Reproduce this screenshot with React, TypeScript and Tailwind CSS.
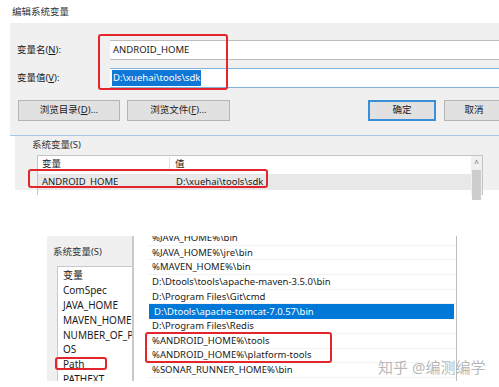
const FONT = "font-['Noto_Sans','Noto_Sans_CJK_SC',sans-serif]";

const pathRows = [
  '%JAVA_HOME%\\bin',
  '%JAVA_HOME%\\jre\\bin',
  '%MAVEN_HOME%\\bin',
  'D:\\Dtools\\tools\\apache-maven-3.5.0\\bin',
  'D:\\Program Files\\Git\\cmd',
  'D:\\Dtools\\apache-tomcat-7.0.57\\bin',
  'D:\\Program Files\\Redis',
  '%ANDROID_HOME%\\tools',
  '%ANDROID_HOME%\\platform-tools',
  '%SONAR_RUNNER_HOME%\\bin',
];

const varRows = ['变量', 'ComSpec', 'JAVA_HOME', 'MAVEN_HOME', 'NUMBER_OF_PROCESSORS', 'OS', 'Path', 'PATHEXT'];

function WinButton({ label, width, primary }: { label: React.ReactNode; width: string; primary?: boolean }) {
  return (
    <div
      className={`flex h-[21px] items-center justify-center bg-[#e1e1e1] text-[9.5px] text-[#222] ${width} ${
        primary ? 'border-2 border-[#3a8fd6]' : 'border border-[#b5b5b5]'
      }`}
    >
      {label}
    </div>
  );
}

export default function App() {
  return (
    <div className={`relative h-[387px] w-[499px] overflow-hidden bg-white text-[#1a1a1a] ${FONT}`}>
      {/* top dialog */}
      <div className="h-[23px] pl-[12px] pt-[5px] text-[9.5px] leading-[14px] text-[#333]">编辑系统变量</div>
      <div className="ml-[10px] h-[112px] bg-[#f0f0f0] pt-[17px]">
        <div className="flex h-[20px] items-center">
          <div className="w-[100px] pl-[7px] text-[9.5px]">
            变量名(<span className="underline">N</span>):
          </div>
          <div className="flex h-[20px] flex-1 items-center border-y border-[#bdbdbd] bg-white pl-[3px] text-[9.5px]">
            ANDROID_HOME
          </div>
        </div>
        <div className="mt-[8px] flex h-[20px] items-center">
          <div className="w-[100px] pl-[7px] text-[9.5px]">
            变量值(<span className="underline">V</span>):
          </div>
          <div className="flex h-[20px] flex-1 items-center border-y border-[#7fb2dd] bg-white pl-[2px] text-[9.5px]">
            <span className="bg-[#0f78d7] px-[1px] leading-[16px] text-white">D:\xuehai\tools\sdk</span>
          </div>
        </div>
        <div className="mt-[12px] flex">
          <div className="ml-[8px]">
            <WinButton width="w-[102px]" label={<>浏览目录(<span className="underline">D</span>)...</>} />
          </div>
          <div className="ml-[7px]">
            <WinButton width="w-[103px]" label={<>浏览文件(<span className="underline">F</span>)...</>} />
          </div>
          <div className="ml-[138px]">
            <WinButton width="w-[68px]" primary label="确定" />
          </div>
          <div className="ml-[8px]">
            <WinButton width="w-[60px]" label="取消" />
          </div>
        </div>
      </div>
      <div className="ml-[10px] h-[1px] bg-[#a8c8e6]" />
      <div className="flex h-[54px]">
        <div className="w-[15px] bg-white" />
        <div className="flex-1 bg-[#f0f0f0] pl-[17px] pt-[1px]">
          <div className="text-[9.5px] leading-[16px] text-[#333]">系统变量(S)</div>
          <div className="ml-[5px] mt-[2px] flex h-[40px] w-[446px] border border-b-0 border-[#c4c4c4] bg-white">
            <div className="flex-1">
              <div className="flex h-[15px] items-center text-[9.5px] leading-[14px]">
                <div className="w-[132px] border-r border-[#e5e5e5] pl-[4px]">变量</div>
                <div className="pl-[5px]">值</div>
              </div>
              <div className="mt-[3px] flex h-[16px] items-center bg-[#e8e8e8] text-[9.5px] leading-[14px]">
                <div className="w-[133px] pl-[4px]">ANDROID_HOME</div>
                <div className="pl-[5px]">D:\xuehai\tools\sdk</div>
              </div>
            </div>
            <div className="w-[11px] bg-[#f0f0f0]">
              <div className="flex h-[14px] items-center justify-center text-[8px] text-[#666]">^</div>
              <div className="mx-auto h-[30px] w-[9px] bg-[#cdcdcd]" />
            </div>
          </div>
        </div>
      </div>

      {/* bottom dialog */}
      <div className="mt-[46px] flex h-[145px]">
        <div className="ml-[47px] w-[85px] overflow-hidden bg-[#f0f0f0] pl-[6px] pt-[8px]">
          <div className="text-[9.5px] leading-[16px] text-[#333]">系统变量(S)</div>
          <div className="ml-[4px] mt-[6px] h-[120px] overflow-hidden border-l border-t border-[#c8c8c8] bg-white pl-[5px] pt-[1px]">
            {varRows.map((v) => (
              <div key={v} className="flex h-[14.8px] items-center whitespace-nowrap text-[10px] leading-[14px]">
                {v}
              </div>
            ))}
          </div>
        </div>
        <div className="w-[2px] bg-[#c9c9c9]" />
        <div className="ml-[13px] w-[310px] overflow-hidden border-r border-[#bdbdbd] bg-white">
          <div className="-mt-[5px]">
            {pathRows.map((p, i) => (
              <div
                key={p}
                className={`flex h-[14.7px] items-center whitespace-nowrap pl-[5px] text-[9.5px] leading-[14px] ${
                  i === 5 ? 'mx-[2px] bg-[#0078d7] pl-[3px] text-white' : 'border-b border-[#f3f3f3]'
                }`}
              >
                {p}
              </div>
            ))}
          </div>
        </div>
      </div>

      {/* watermark */}
      <div className="absolute left-[378px] top-[357px] text-[15px] leading-[20px] text-[#a5a5a5]/80">知乎 @编测编学</div>

      {/* red highlight boxes */}
      <div className="absolute left-[98px] top-[34px] h-[56px] w-[130px] rounded-[3px] border-2 border-[#e3262b]" />
      <div className="absolute left-[28px] top-[169px] h-[19px] w-[240px] rounded-[3px] border-2 border-[#e3262b]" />
      <div className="absolute left-[145px] top-[332px] h-[31px] w-[187px] rounded-[3px] border-2 border-[#e3262b]" />
      <div className="absolute left-[55px] top-[357px] h-[13px] w-[52px] rounded-[3px] border-2 border-[#e3262b]" />
    </div>
  );
}
